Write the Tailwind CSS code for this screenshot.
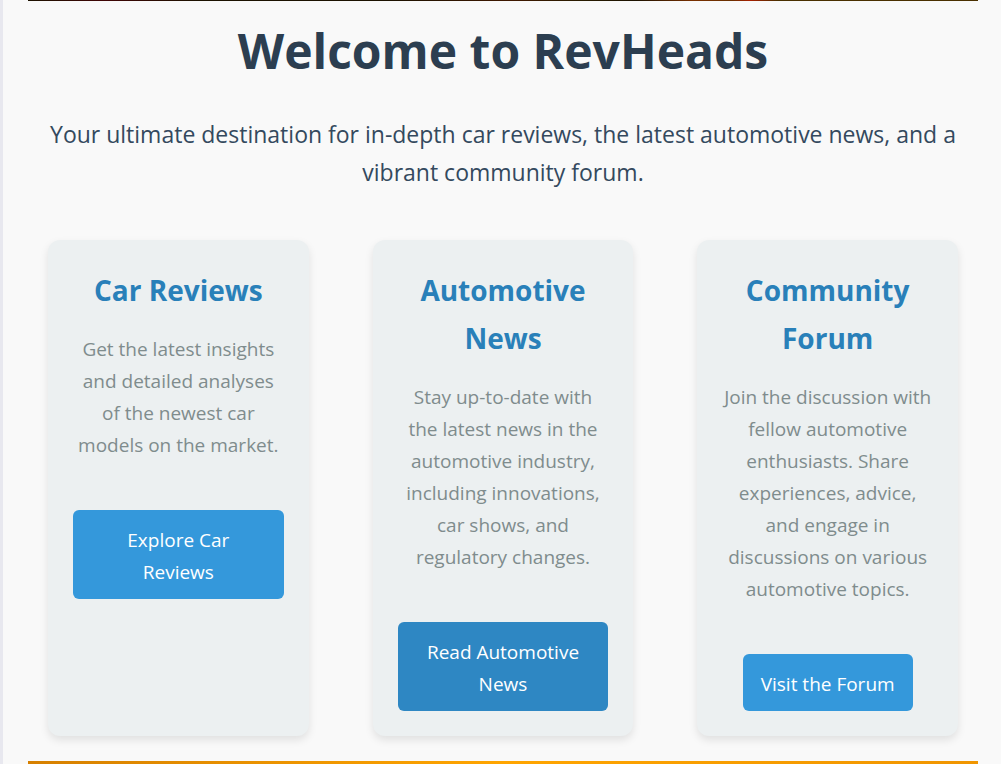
<!DOCTYPE html>
<html lang="en">
<head>
<meta charset="utf-8">
<meta name="viewport" content="width=device-width, initial-scale=1">
<title>RevHeads</title>
<script src="https://cdn.jsdelivr.net/npm/@tailwindcss/browser@4"></script>
</head>
<body class="min-h-screen border-l-3 border-[#e8e8ef] bg-[#f9f9f9] pr-[23px] pl-[25px] text-center font-['Segoe_UI','Open_Sans',sans-serif]">
<div class="h-px bg-[linear-gradient(to_right,#1c1200_0%,#400505_8%,#1c1200_18%,#1c1200_38%,#401800_51%,#2a1c00_58%,#1c1200_64%,#7a3000_70%,#6a3000_74%,#a82000_76%,#4a3000_79%,#4a3000_100%)]"></div>
<main class="px-5 pt-[10px] pb-6">
  <h1 class="text-[48px] leading-[80px] font-bold text-[#2c3e50]">Welcome to RevHeads</h1>
  <p class="mt-6 text-[23px] leading-[38px] text-[#34495e]">Your ultimate destination for in-depth car reviews, the latest automotive news, and a<br>vibrant community forum.</p>
  <div class="mt-[49px] grid grid-cols-3 gap-16">
    <section class="flex flex-col items-center rounded-xl bg-[#ecf0f1] p-[25px] shadow-[0_4px_8px_rgba(0,0,0,0.1)]">
      <h2 class="mt-px text-[28px] leading-[48px] font-bold text-[#2980b9]">Car Reviews</h2>
      <p class="mt-[19px] text-[19px] leading-8 whitespace-nowrap text-[#7f8c8d]">Get the latest insights<br>and detailed analyses<br>of the newest car<br>models on the market.</p>
      <a href="#reviews" class="mt-[49px] w-full rounded-md bg-[#3498db] px-[18px] pt-[14px] pb-[11px] text-[19px] leading-8 text-white">Explore Car<br>Reviews</a>
    </section>
    <section class="flex flex-col items-center rounded-xl bg-[#ecf0f1] p-[25px] shadow-[0_4px_8px_rgba(0,0,0,0.1)]">
      <h2 class="mt-px text-[28px] leading-[48px] font-bold text-[#2980b9]">Automotive<br>News</h2>
      <p class="mt-[19px] text-[19px] leading-8 whitespace-nowrap text-[#7f8c8d]">Stay up-to-date with<br>the latest news in the<br>automotive industry,<br>including innovations,<br>car shows, and<br>regulatory changes.</p>
      <a href="#news" class="mt-[49px] w-full rounded-md bg-[#2e87c3] px-[18px] pt-[14px] pb-[11px] text-[19px] leading-8 text-white">Read Automotive<br>News</a>
    </section>
    <section class="flex flex-col items-center rounded-xl bg-[#ecf0f1] p-[25px] shadow-[0_4px_8px_rgba(0,0,0,0.1)]">
      <h2 class="mt-px text-[28px] leading-[48px] font-bold text-[#2980b9]">Community<br>Forum</h2>
      <p class="mt-[19px] text-[19px] leading-8 whitespace-nowrap text-[#7f8c8d]">Join the discussion with<br>fellow automotive<br>enthusiasts. Share<br>experiences, advice,<br>and engage in<br>discussions on various<br>automotive topics.</p>
      <a href="#forum" class="mt-[49px] rounded-md bg-[#3498db] px-[18px] pt-[14px] pb-[11px] text-[19px] leading-8 whitespace-nowrap text-white">Visit the Forum</a>
    </section>
  </div>
</main>
<div class="mt-px h-[3px] bg-linear-to-r from-[#d68000] via-[#ffa500] via-50% to-[#f09500]"></div>
</body>
</html>
